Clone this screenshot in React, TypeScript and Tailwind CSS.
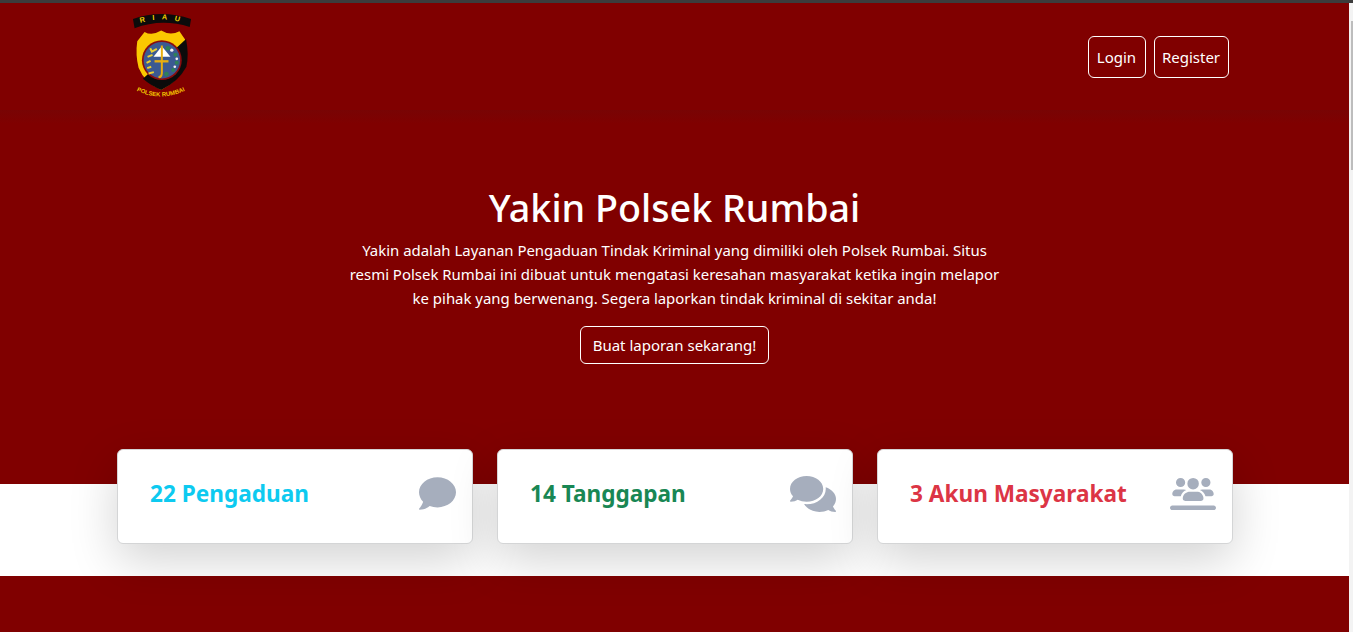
import { FaComment, FaComments } from "react-icons/fa";
import { FaUsersLine } from "react-icons/fa6";
import type { IconType } from "react-icons";

const PoliceLogo = () => (
  <svg viewBox="60 40 185 265" className="ml-[14px] h-[88px] w-[62px]">
    <defs>
      <path id="riauArc" d="M70 76 Q150 44 236 76" />
      <path id="polsekArc" d="M76 274 Q150 310 232 270" />
    </defs>
    <path d="M65 58 Q150 28 240 58 L236 82 Q150 55 70 86 Z" fill="#0b0b0b" />
    <text fontSize="22" fontWeight="700" fill="#f5d000" fontFamily="Liberation Sans, sans-serif" letterSpacing="22">
      <textPath href="#riauArc" startOffset="18">RIAU</textPath>
    </text>
    <path d="M100 97 Q122 110 150 93 Q178 110 205 95 L222 120 Q232 165 224 200 Q200 245 150 272 Q100 250 82 205 Q72 165 78 125 Z" fill="#fbc800" />
    <path d="M225 118 Q234 165 226 202 Q202 247 150 272 Q118 258 95 238 Z" fill="#0b0b0b" />
    <circle cx="152" cy="182" r="60" fill="#8a0d10" />
    <circle cx="152" cy="182" r="55" fill="#3b5a92" />
    <path d="M152 140 L127 172 L178 172 Z" fill="#fff" />
    <path d="M149 138 H155 V222 Q153 238 142 236 L142 230 Q149 230 149 220 Z" fill="#e8ae10" />
    <rect x="130" y="182" width="42" height="7" fill="#e8ae10" />
    <g fill="none" stroke="#e9cf35" strokeWidth="6">
      <path d="M137 148 L122 156 L117 146" />
      <path d="M124 166 L109 172" />
      <path d="M118 184 L106 190" />
      <path d="M120 202 L108 206" />
      <path d="M128 218 L112 222" />
    </g>
    <g fill="#2f8058">
      <circle cx="170" cy="146" r="7" />
      <circle cx="193" cy="166" r="6" />
      <circle cx="197" cy="190" r="6" />
      <circle cx="186" cy="212" r="6" />
      <circle cx="166" cy="224" r="7" />
    </g>
    <g fill="#f2f2f2">
      <circle cx="182" cy="152" r="5" />
      <circle cx="197" cy="178" r="4" />
      <circle cx="191" cy="202" r="4" />
    </g>
    <text fontSize="18" fontWeight="700" fill="#f5c800" fontFamily="Liberation Sans, sans-serif">
      <textPath href="#polsekArc" startOffset="0">POLSEK RUMBAI</textPath>
    </text>
  </svg>
);

const stats: { label: string; color: string; icon: IconType; iconClass: string }[] = [
  { label: "22 Pengaduan", color: "text-[#0dcaf0]", icon: FaComment, iconClass: "h-[37px] w-[37px]" },
  { label: "14 Tanggapan", color: "text-[#198754]", icon: FaComments, iconClass: "h-[46px] w-[46px]" },
  { label: "3 Akun Masyarakat", color: "text-[#dc3545]", icon: FaUsersLine, iconClass: "h-[46px] w-[46px]" },
];

const StatCard = ({
  label,
  color,
  icon: Icon,
  iconClass,
}: {
  label: string;
  color: string;
  icon: IconType;
  iconClass: string;
}) => (
  <div className="flex h-[95px] w-[356px] items-center justify-between rounded-md border border-[#d4d5d6] bg-white pb-[6px] pl-8 pr-4 shadow-[0_16px_48px_rgba(0,0,0,0.175)]">
    <h3 className={`text-[22.6px] font-bold ${color}`}>{label}</h3>
    <Icon className={`text-[#a6aebd] ${iconClass}`} />
  </div>
);

export default function App() {
  return (
    <div className="flex h-[632px] flex-col overflow-hidden bg-[#800000] font-['Noto_Sans',sans-serif] text-white">
      <div className="h-[3px] shrink-0 bg-[#3c3c3c]" />
      <div className="flex min-h-0 flex-1">
        <div className="w-[1349px] shrink-0">
          <nav className="h-[107px] bg-[#800000]">
            <div className="mx-auto flex w-[1116px] items-center justify-between pt-[10px]">
              <PoliceLogo />
              <div className="mr-[4px] flex gap-2">
                <a className="flex h-[42px] w-[58px] items-center justify-center rounded-md border border-white text-[15px]">Login</a>
                <a className="flex h-[42px] w-[75px] items-center justify-center rounded-md border border-white text-[15px]">Register</a>
              </div>
            </div>
          </nav>
          <div className="h-[14px] bg-gradient-to-b from-[#780404] to-[#800000]" />
          <section className="flex h-[360px] flex-col items-center bg-[#800000] pt-[60px]">
            <h1 className="text-[37.7px] font-medium leading-[48px]">Yakin Polsek Rumbai</h1>
            <p className="mt-[6px] w-[660px] text-center text-[14.95px] leading-6">
              Yakin adalah Layanan Pengaduan Tindak Kriminal yang dimiliki oleh Polsek Rumbai. Situs resmi Polsek Rumbai ini dibuat untuk mengatasi keresahan masyarakat ketika ingin melapor ke pihak yang berwenang. Segera laporkan tindak kriminal di sekitar anda!
            </p>
            <a className="mt-4 flex h-[38px] w-[189px] items-center justify-center rounded-md border border-white text-[15px]">Buat laporan sekarang!</a>
          </section>
          <section className="relative h-[92px] bg-white">
            <div className="absolute left-[117px] top-[-35px] flex gap-6">
              {stats.map((s) => (
                <StatCard key={s.label} {...s} />
              ))}
            </div>
          </section>
          <div className="h-[56px] bg-[#800000]" />
        </div>
        <div className="relative w-[4px] bg-[#f3f3f3]">
          <div className="absolute left-[2px] top-[18px] h-[149px] w-[2px] bg-[#bdbdbd]" />
        </div>
      </div>
    </div>
  );
}
